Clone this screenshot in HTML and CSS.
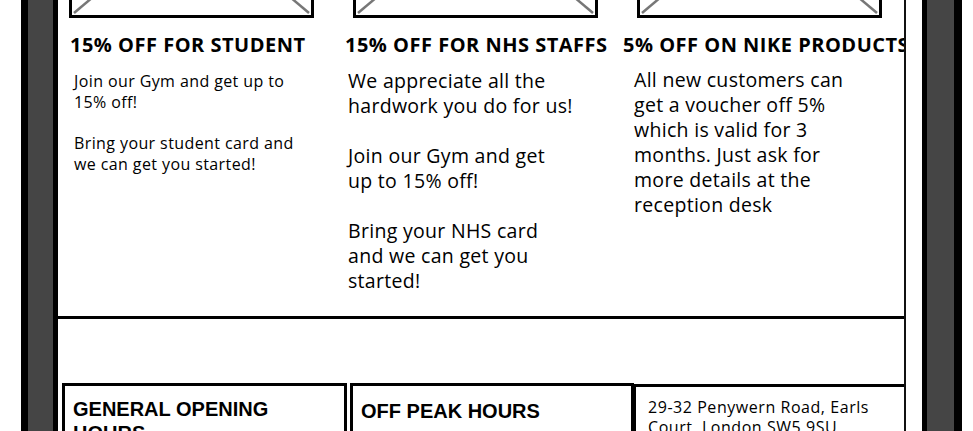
FILE: index.html
```html
<!DOCTYPE html>
<html lang="en">
<head>
<meta charset="utf-8">
<title>Gym offers</title>
<link rel="stylesheet" href="styles.css">
</head>
<body>
<div class="device">
  <div class="screen">
    <main class="page">
      <section class="offers">
        <article class="offer offer--student">
          <svg class="placeholder" viewBox="0 0 245 208" width="245" height="208" aria-hidden="true">
            <rect x="1.5" y="1.5" width="242" height="205" fill="#fff" stroke="#000" stroke-width="3"/>
            <line x1="5" y1="5" x2="240" y2="203" stroke="#777" stroke-width="2.5"/>
            <line x1="240" y1="5" x2="5" y2="203" stroke="#777" stroke-width="2.5"/>
          </svg>
          <h2 class="offer-title">15% OFF FOR STUDENT</h2>
          <div class="offer-text offer-text--small">
            <p>Join our Gym and get up to<br>15% off!</p>
            <p>Bring your student card and<br>we can get you started!</p>
          </div>
        </article>
        <article class="offer offer--nhs">
          <svg class="placeholder" viewBox="0 0 245 208" width="245" height="208" aria-hidden="true">
            <rect x="1.5" y="1.5" width="242" height="205" fill="#fff" stroke="#000" stroke-width="3"/>
            <line x1="5" y1="5" x2="240" y2="203" stroke="#777" stroke-width="2.5"/>
            <line x1="240" y1="5" x2="5" y2="203" stroke="#777" stroke-width="2.5"/>
          </svg>
          <h2 class="offer-title">15% OFF FOR NHS STAFFS</h2>
          <div class="offer-text">
            <p>We appreciate all the<br>hardwork you do for us!</p>
            <p>Join our Gym and get<br>up to 15% off!</p>
            <p>Bring your NHS card<br>and we can get you<br>started!</p>
          </div>
        </article>
        <article class="offer offer--nike">
          <svg class="placeholder" viewBox="0 0 245 208" width="245" height="208" aria-hidden="true">
            <rect x="1.5" y="1.5" width="242" height="205" fill="#fff" stroke="#000" stroke-width="3"/>
            <line x1="5" y1="5" x2="240" y2="203" stroke="#777" stroke-width="2.5"/>
            <line x1="240" y1="5" x2="5" y2="203" stroke="#777" stroke-width="2.5"/>
          </svg>
          <h2 class="offer-title">5% OFF ON NIKE PRODUCTS</h2>
          <div class="offer-text">
            <p>All new customers can<br>get a voucher off 5%<br>which is valid for 3<br>months. Just ask for<br>more details at the<br>reception desk</p>
          </div>
        </article>
      </section>
      <section class="info">
        <div class="info-box info-box--hours">
          <h3 class="info-title">GENERAL OPENING HOURS</h3>
        </div>
        <div class="info-box info-box--peak">
          <h3 class="info-title">OFF PEAK HOURS</h3>
        </div>
        <div class="info-box info-box--address">
          <p class="info-text">29-32 Penywern Road, Earls<br>Court, London SW5 9SU</p>
        </div>
      </section>
    </main>
  </div>
</div>
</body>
</html>
```

FILE: styles.css
```css
html {
  overflow: hidden;
}

body {
  margin: 0;
  background: #fff;
  color: #000;
  font-family: "Open Sans", Lato, "Liberation Sans", sans-serif;
}

.device {
  box-sizing: border-box;
  width: 941px;
  height: 640px;
  margin-left: 21px;
  padding: 0 27px 0 25px;
  background: #454545;
  border-left: 7px solid #000;
  border-right: 8px solid #000;
}

.screen {
  height: 100%;
  background: #fff;
  border-left: 5px solid #000;
  border-right: 5px solid #000;
}

.page {
  width: 846px;
  height: 100%;
  border-right: 2px solid #111;
  overflow: hidden;
}

.offers {
  display: grid;
  grid-template-columns: 284px 284px minmax(0, 1fr);
  height: 316px;
  border-bottom: 3px solid #000;
}

.offer {
  min-width: 0;
}

.placeholder {
  display: block;
  margin: -190px 0 0 11px;
}

.offer-title {
  margin: 15px 0 0;
  font-size: 20px;
  line-height: 24px;
  font-weight: 700;
  letter-spacing: 0.5px;
  white-space: nowrap;
}

.offer--student .offer-title { margin-left: 12px; }
.offer--nhs .offer-title { margin-left: 3px; }
.offer--nike .offer-title { margin-left: -3px; }

.offer-text {
  margin-top: 12px;
  font-size: 19.5px;
  line-height: 25px;
  letter-spacing: 0.3px;
}

.offer-text p {
  margin: 0 0 25px;
}

.offer-text--small {
  font-size: 16px;
  line-height: 20.5px;
  letter-spacing: 0.4px;
}

.offer-text--small p {
  margin-bottom: 21px;
}

.offer--student .offer-text { margin-left: 16px; margin-top: 14px; }
.offer--nhs .offer-text { margin-left: 6px; margin-top: 11px; }
.offer--nike .offer-text { margin-left: 8px; margin-top: 10px; }

.info {
  display: flex;
  align-items: flex-start;
  padding: 64px 0 0 4px;
}

.info-box {
  box-sizing: border-box;
  height: 120px;
  padding: 11px 8px 0;
  border: 3px solid #000;
  background: #fff;
}

.info-box--hours { width: 285px; }
.info-box--peak { width: 284px; margin-left: 3px; padding-top: 13px; }
.info-box--address {
  flex: 1;
  margin: 1px 0 0 -1px;
  padding-left: 12px;
  border-right: 0;
}

.info-title {
  margin: 0;
  font-family: "Liberation Sans", Arial, sans-serif;
  font-size: 20px;
  line-height: 24px;
  font-weight: 700;
}

.info-text {
  margin: 0;
  font-size: 16px;
  line-height: 20px;
  letter-spacing: 0.55px;
}

.info-box--address .info-text {
  margin-top: -1px;
}
```
